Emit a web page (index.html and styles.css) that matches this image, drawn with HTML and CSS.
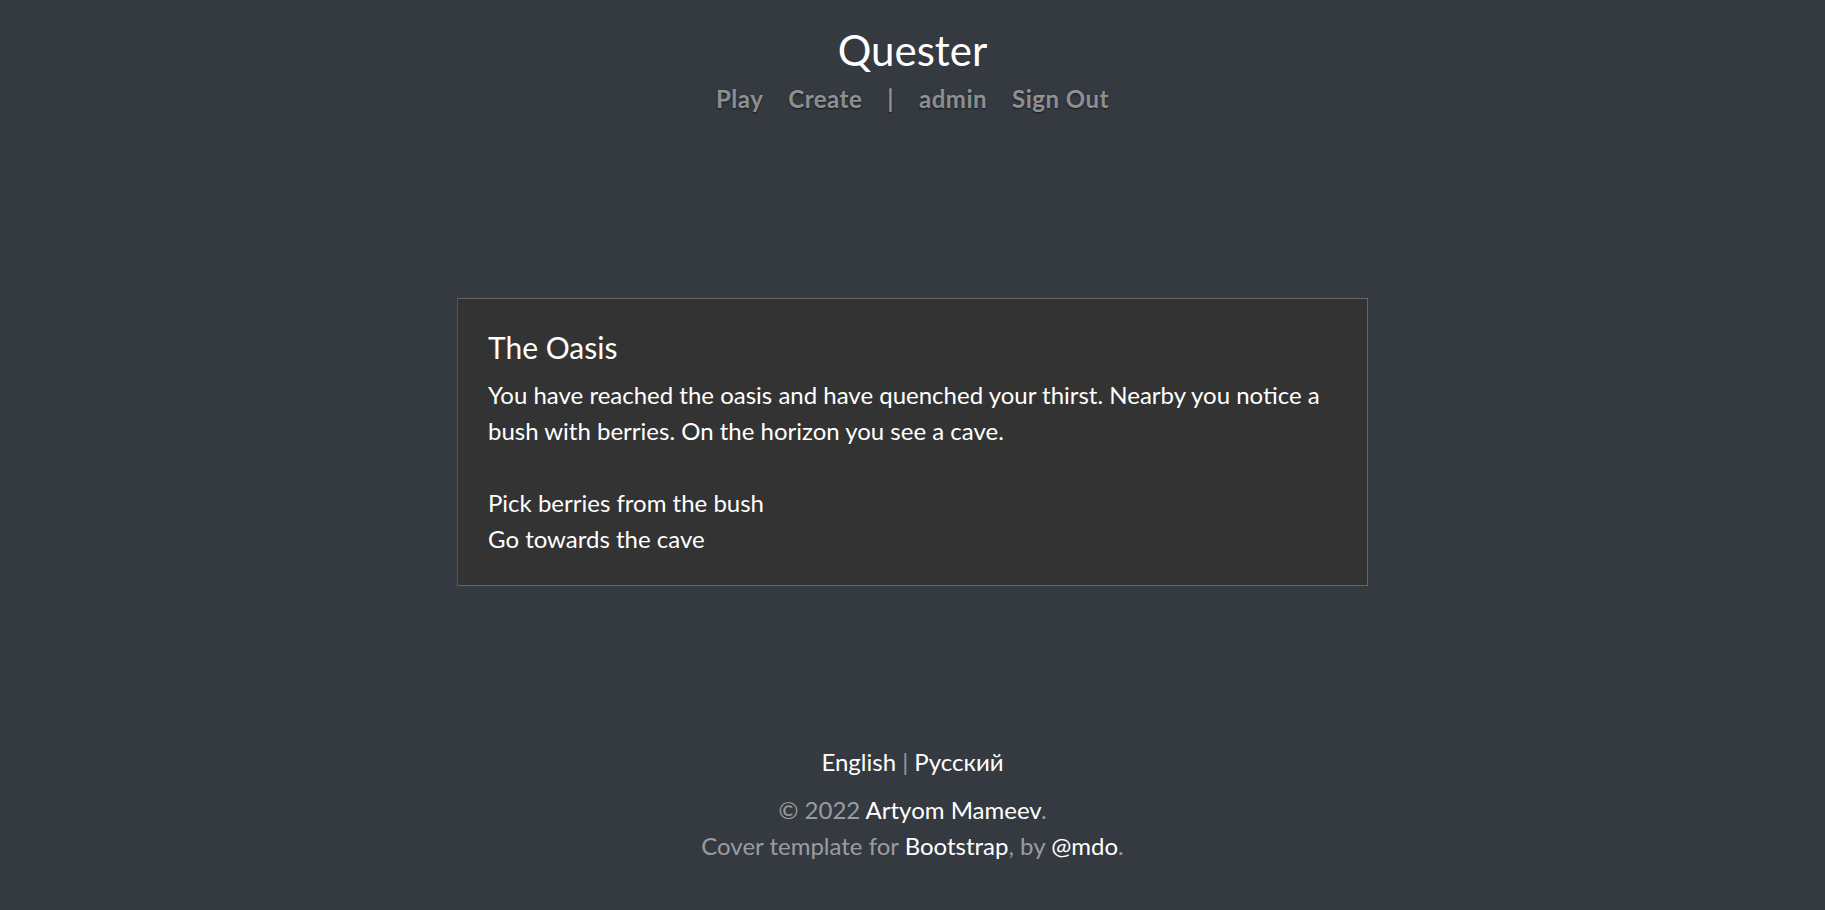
FILE: index.html
```html
<!DOCTYPE html>
<html lang="en">
<head>
<meta charset="utf-8">
<title>Quester</title>
<link rel="stylesheet" href="styles.css">
</head>
<body>
<div class="cover">
  <header class="masthead">
    <h3 class="brand">Quester</h3>
    <nav class="nav">
      <a class="nav-link" href="#">Play</a>
      <a class="nav-link" href="#">Create</a>
      <span class="nav-link sep">|</span>
      <a class="nav-link" href="#">admin</a>
      <a class="nav-link" href="#">Sign Out</a>
    </nav>
  </header>
  <main class="main">
    <div class="card">
      <h5 class="card-title">The Oasis</h5>
      <p class="card-text">You have reached the oasis and have quenched your thirst. Nearby you notice a bush with berries. On the horizon you see a cave.</p>
      <div class="choices">
        <a class="choice" href="#">Pick berries from the bush</a>
        <a class="choice" href="#">Go towards the cave</a>
      </div>
    </div>
  </main>
  <footer class="footer">
    <p class="langs"><a href="#">English</a> <span class="muted">|</span> <a href="#">Русский</a></p>
    <p class="credits muted">© 2022 <a href="#">Artyom Mameev</a>.<br>Cover template for <a href="#">Bootstrap</a>, by <a href="#">@mdo</a>.</p>
  </footer>
</div>
</body>
</html>
```
FILE: styles.css
```css
html, body {
  height: 100%;
}
body {
  margin: 0;
  background: #343a40;
  color: #fff;
  font-family: Lato, "Open Sans", sans-serif;
  font-size: 24px;
  line-height: 36px;
}
a {
  color: #fff;
  text-decoration: none;
}
.cover {
  display: flex;
  flex-direction: column;
  min-height: 100vh;
  box-sizing: border-box;
  padding: 25px 24px 0;
  text-align: center;
}
.masthead {
  display: flex;
  flex-direction: column;
  align-items: center;
}
.brand {
  margin: 0;
  font-size: 42px;
  font-weight: 400;
  line-height: 1.2;
}
.nav {
  display: flex;
  justify-content: center;
}
.nav-link {
  padding: 6px 0;
  margin-left: 25px;
  font-weight: 700;
  letter-spacing: 0.5px;
  color: rgba(255, 255, 255, 0.5);
  text-shadow: 0 1px 2px rgba(0, 0, 0, 0.6);
}
.nav-link:first-child {
  margin-left: 0;
}
.main {
  flex: 1;
  display: flex;
  align-items: center;
  justify-content: center;
  padding-top: 16px;
}
.card {
  width: 911px;
  box-sizing: border-box;
  background: #333333;
  border: 1px solid #666;
  border-left-color: #555;
  padding: 30px 30px 28px;
  text-align: left;
}
.card-title {
  margin: 0 0 12px;
  font-size: 30px;
  font-weight: 400;
  line-height: 1.2;
}
.card-text {
  margin: 0 0 36px;
}
.choices {
  display: flex;
  flex-direction: column;
}
.footer {
  padding-bottom: 46px;
}
.footer p {
  margin: 0;
}
.langs {
  margin-bottom: 12px !important;
}
.muted {
  color: rgba(255, 255, 255, 0.5);
}
```
